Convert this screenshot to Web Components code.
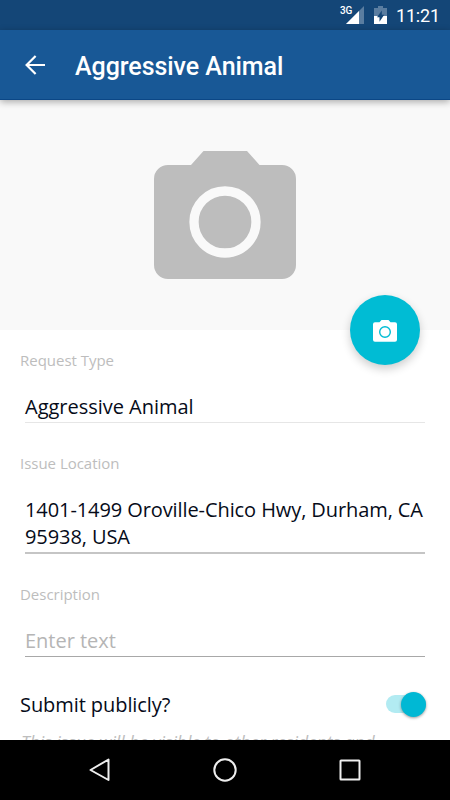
<!DOCTYPE html>
<html lang="en">
<head>
<meta charset="utf-8">
<title>Aggressive Animal</title>
<style>
  :root {
    --main-color: #185896;
    --status-color: #144677;
    --accent-color: #00bcd4;
    --hint-color: #bdbdbd;
    --text-color: #060b19;
  }

  body {
    margin: 0;
    font-family: "Open Sans", sans-serif;
    color: var(--text-color);
  }
</style>
</head>
<body>
<request-screen>
  <status-bar slot="top" time="11:21" network="3G"></status-bar>
  <app-bar slot="top">Aggressive Animal</app-bar>
  <photo-picker></photo-picker>
  <form-field label="Request Type" line="#e6e6e6" style="--field-height: 103px">Aggressive Animal</form-field>
  <form-field label="Issue Location" line="#c5c5c5" line-width="2" style="--field-height: 131px; --value-spacing: -.09px">1401-1499 Oroville-Chico Hwy, Durham, CA 95938, USA</form-field>
  <form-field label="Description" line="#a8a8a8" hint style="--field-height: 104px">Enter text</form-field>
  <switch-row>
    Submit publicly?
    <span slot="note">This issue will be visible to other residents and</span>
  </switch-row>
  <nav-bar slot="bottom"></nav-bar>
</request-screen>

<script>
class RequestScreen extends HTMLElement {
  constructor() {
    super();
    this.attachShadow({ mode: "open" }).innerHTML = `
    <style>
    :host {
      display: flex;
      flex-direction: column;
      width: 450px;
      height: 800px;
      overflow: hidden;
      background: #fff;
    }

    header {
      flex: none;
      position: relative;
      z-index: 2;
    }

    main {
      flex: 1;
      min-height: 0;
      overflow: hidden;
    }
    </style>

    <header><slot name="top"></slot></header>
    <main><slot></slot></main>
    <slot name="bottom"></slot>
    `;
  }
}

class StatusBar extends HTMLElement {
  connectedCallback() {
    this.attachShadow({ mode: "open" }).innerHTML = `
    <style>
    :host {
      display: flex;
      justify-content: flex-end;
      align-items: center;
      height: 30px;
      box-sizing: border-box;
      padding-right: 10px;
      background: var(--status-color);
      color: #fff;
      font-family: Roboto, sans-serif;
    }

    .network {
      font: 500 10px/12px Roboto, sans-serif;
      align-self: flex-start;
      margin: 5px -6px 0 0;
      letter-spacing: -.3px;
      z-index: 1;
    }

    .signal { margin-right: 10px; }
    .battery { margin-right: 9px; }

    time {
      margin-top: 2px;
      font-size: 18px;
      line-height: 30px;
      letter-spacing: -.15px;
    }
    </style>

    <span class="network">${this.getAttribute("network")}</span>
    <svg class="signal" width="18" height="18" viewBox="0 0 18 18">
      <path d="M18 0V18H0z" fill="#fff" fill-opacity=".3"/>
      <path d="M13 5V18H0z" fill="#fff"/>
    </svg>
    <svg class="battery" width="13" height="18" viewBox="0 0 13 18">
      <path d="M4 0h5v2h4v8H0V2h4z" fill="#fff" fill-opacity=".3"/>
      <path d="M0 10h13v8H0z" fill="#fff"/>
      <path d="M7.8 4.5v4.3h2.4L5.5 15.8v-4.6H3z" fill="var(--status-color)"/>
    </svg>
    <time>${this.getAttribute("time")}</time>
    `;
  }
}

class AppBar extends HTMLElement {
  constructor() {
    super();
    this.attachShadow({ mode: "open" }).innerHTML = `
    <style>
    :host {
      display: flex;
      align-items: center;
      height: 70px;
      box-sizing: border-box;
      padding-left: 25px;
      background: var(--main-color);
      color: #fff;
      box-shadow: inset 0 -1px #0b4786, 0 2px 7px rgba(0, 0, 0, .32);
    }

    svg { margin-right: 30px; }

    h1 {
      margin: 4px 0 0;
      font: 500 25px/30px Roboto, sans-serif;
      letter-spacing: -.05px;
    }
    </style>

    <svg width="20" height="20" viewBox="0 0 20 20" fill="none" stroke="#fff" stroke-width="2.2">
      <path d="M10.6 .9L1.6 10l9 9.1M1.6 10H20"/>
    </svg>
    <h1><slot></slot></h1>
    `;
  }
}

class PhotoPicker extends HTMLElement {
  constructor() {
    super();
    this.attachShadow({ mode: "open" }).innerHTML = `
    <style>
    :host {
      display: flex;
      justify-content: center;
      position: relative;
      height: 230px;
      box-sizing: border-box;
      padding-top: 51px;
      background: #f9f9f9;
    }

    /* floating button straddles the lower edge of the photo */
    button {
      position: absolute;
      right: 30px;
      bottom: -35.4px;
      width: 70px;
      height: 70px;
      padding: 1px 0 0;
      display: flex;
      justify-content: center;
      align-items: center;
      border: 0;
      border-radius: 50%;
      background: var(--accent-color);
      box-shadow: 0 4px 10px rgba(0, 0, 0, .2);
    }
    </style>

    <svg width="142" height="128" viewBox="0 0 142 128">
      <path d="M37 14L49.5 0H93L105.5 14H128a14 14 0 0 1 14 14V114a14 14 0 0 1-14 14H14A14 14 0 0 1 0 114V28A14 14 0 0 1 14 14z" fill="#bdbdbd"/>
      <circle cx="71" cy="71" r="31" fill="none" stroke="#f9f9f9" stroke-width="9.3"/>
    </svg>
    <button aria-label="Take photo">
      <svg width="24" height="22" viewBox="0 0 24 22">
        <path d="M6.5 2.2L8.5 0h7l2 2.2H22a2 2 0 0 1 2 2V19.7a2 2 0 0 1-2 2H2a2 2 0 0 1-2-2V4.2a2 2 0 0 1 2-2z" fill="#fff"/>
        <circle cx="12" cy="12" r="5.3" fill="none" stroke="var(--accent-color)" stroke-width="1.4"/>
      </svg>
    </button>
    `;
  }
}

class FormField extends HTMLElement {
  connectedCallback() {
    const color = this.hasAttribute("hint") ? "#b5b5b5" : "inherit";
    const lineWidth = this.getAttribute("line-width") || 1;

    this.attachShadow({ mode: "open" }).innerHTML = `
    <style>
    :host {
      display: block;
      height: var(--field-height, 105px);
      box-sizing: border-box;
      padding: 20px 25px 0 20px;
    }

    label {
      display: block;
      font-size: 15px;
      line-height: 20px;
      letter-spacing: -.02px;
      color: var(--hint-color);
    }

    .value {
      margin: 23px 0 0 5px;
      padding-bottom: 2px;
      border-bottom: ${lineWidth}px solid ${this.getAttribute("line")};
      font-size: 20px;
      line-height: 27px;
      letter-spacing: var(--value-spacing, -.02px);
      color: ${color};
    }
    </style>

    <label>${this.getAttribute("label")}</label>
    <div class="value"><slot></slot></div>
    `;
  }
}

class SwitchRow extends HTMLElement {
  constructor() {
    super();
    this.attachShadow({ mode: "open" }).innerHTML = `
    <style>
    :host {
      display: block;
      padding: 21px 24px 0 20px;
    }

    .row {
      display: flex;
      justify-content: space-between;
      align-items: center;
      height: 30px;
      font-size: 20px;
      letter-spacing: -.07px;
    }

    .track {
      display: flex;
      align-items: center;
      justify-content: flex-end;
      width: 40px;
      height: 18px;
      border-radius: 9px;
      background: #b2ebf2;
    }

    .thumb {
      width: 25px;
      height: 25px;
      border-radius: 50%;
      background: #00b8d4;
      box-shadow: 0 1px 3px rgba(0, 0, 0, .4);
    }

    .note {
      margin: 11px 0 0 1px;
      font-size: 17.5px;
      line-height: 24px;
      letter-spacing: -.02px;
      font-style: italic;
      white-space: nowrap;
      color: var(--hint-color);
    }
    </style>

    <div class="row">
      <span><slot></slot></span>
      <div class="track"><div class="thumb"></div></div>
    </div>
    <div class="note"><slot name="note"></slot></div>
    `;
  }
}

class NavBar extends HTMLElement {
  constructor() {
    super();
    this.attachShadow({ mode: "open" }).innerHTML = `
    <style>
    :host {
      flex: none;
      display: flex;
      justify-content: center;
      align-items: center;
      gap: 101px;
      height: 60px;
      position: relative;
      background: #000;
    }

    svg {
      fill: none;
      stroke: #eee;
      stroke-width: 2;
      stroke-linejoin: round;
    }
    </style>

    <svg width="24" height="24" viewBox="0 0 24 24"><path d="M20.5 1.5V22L2.5 12z"/></svg>
    <svg width="24" height="24" viewBox="0 0 24 24"><circle cx="12" cy="12" r="10.7"/></svg>
    <svg width="24" height="24" viewBox="0 0 24 24"><rect x="2.5" y="2.5" width="19" height="19" rx=".5"/></svg>
    `;
  }
}

customElements.define("request-screen", RequestScreen);
customElements.define("status-bar", StatusBar);
customElements.define("app-bar", AppBar);
customElements.define("photo-picker", PhotoPicker);
customElements.define("form-field", FormField);
customElements.define("switch-row", SwitchRow);
customElements.define("nav-bar", NavBar);
</script>
</body>
</html>
